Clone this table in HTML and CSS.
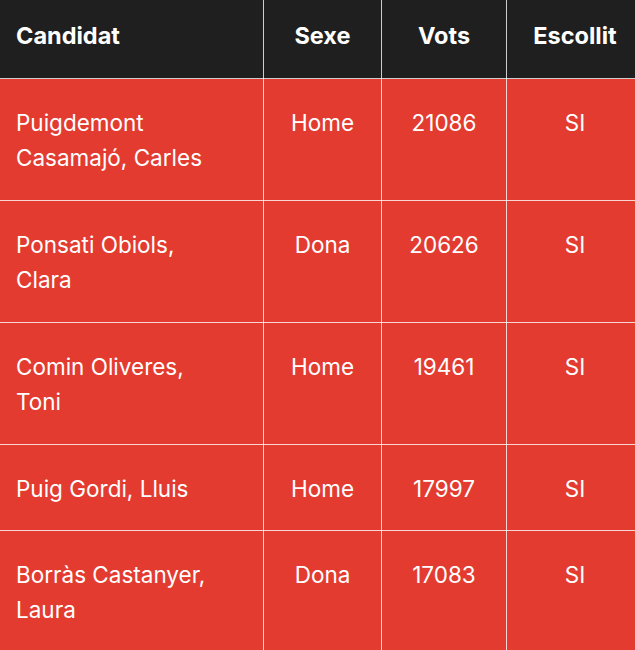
FILE: index.html
```html
<!DOCTYPE html>
<html lang="ca">
<head>
<meta charset="utf-8">
<link rel="stylesheet" href="styles.css">
</head>
<body>
<div class="frame">
<table class="results">
  <colgroup>
    <col class="c-name">
    <col class="c-sex">
    <col class="c-votes">
    <col class="c-elected">
  </colgroup>
  <thead>
    <tr>
      <th class="left">Candidat</th>
      <th>Sexe</th>
      <th>Vots</th>
      <th>Escollit</th>
    </tr>
  </thead>
  <tbody>
    <tr><td class="left">Puigdemont Casamajó, Carles</td><td>Home</td><td>21086</td><td>SI</td></tr>
    <tr><td class="left">Ponsati Obiols, Clara</td><td>Dona</td><td>20626</td><td>SI</td></tr>
    <tr><td class="left">Comin Oliveres, Toni</td><td>Home</td><td>19461</td><td>SI</td></tr>
    <tr><td class="left">Puig Gordi, Lluis</td><td>Home</td><td>17997</td><td>SI</td></tr>
    <tr><td class="left">Borràs Castanyer, Laura</td><td>Dona</td><td>17083</td><td>SI</td></tr>
  </tbody>
</table>
</div>
</body>
</html>
```
FILE: styles.css
```css
html, body {
  margin: 0;
  padding: 0;
  background: #e33b30;
}
body {
  font-family: Inter, "Noto Sans", sans-serif;
  color: #fff;
  overflow: hidden;
}
.frame {
  width: 635px;
  overflow: hidden;
}
.results {
  border-collapse: collapse;
  table-layout: fixed;
  width: 644px;
  margin-left: -1px;
}
.c-name { width: 264px; }
.c-sex { width: 118px; }
.c-votes { width: 125px; }
.c-elected { width: 137px; }
.results th,
.results td {
  border: 1px solid rgba(255, 255, 255, 0.78);
  text-align: center;
  vertical-align: top;
}
.results th {
  background: #1f1f1f;
  font-size: 23.5px;
  font-weight: 700;
  line-height: 35px;
  padding: 18px 4px 25px;
  border-top: 0;
}
.results td {
  background: #e33b30;
  font-size: 22.5px;
  font-weight: 400;
  line-height: 35px;
  padding: 26px 4px 25px;
}
.results tbody tr:nth-child(4) td {
  padding-bottom: 24px;
}
.results .left {
  text-align: left;
  padding-left: 16px;
  padding-right: 48px;
}
```
